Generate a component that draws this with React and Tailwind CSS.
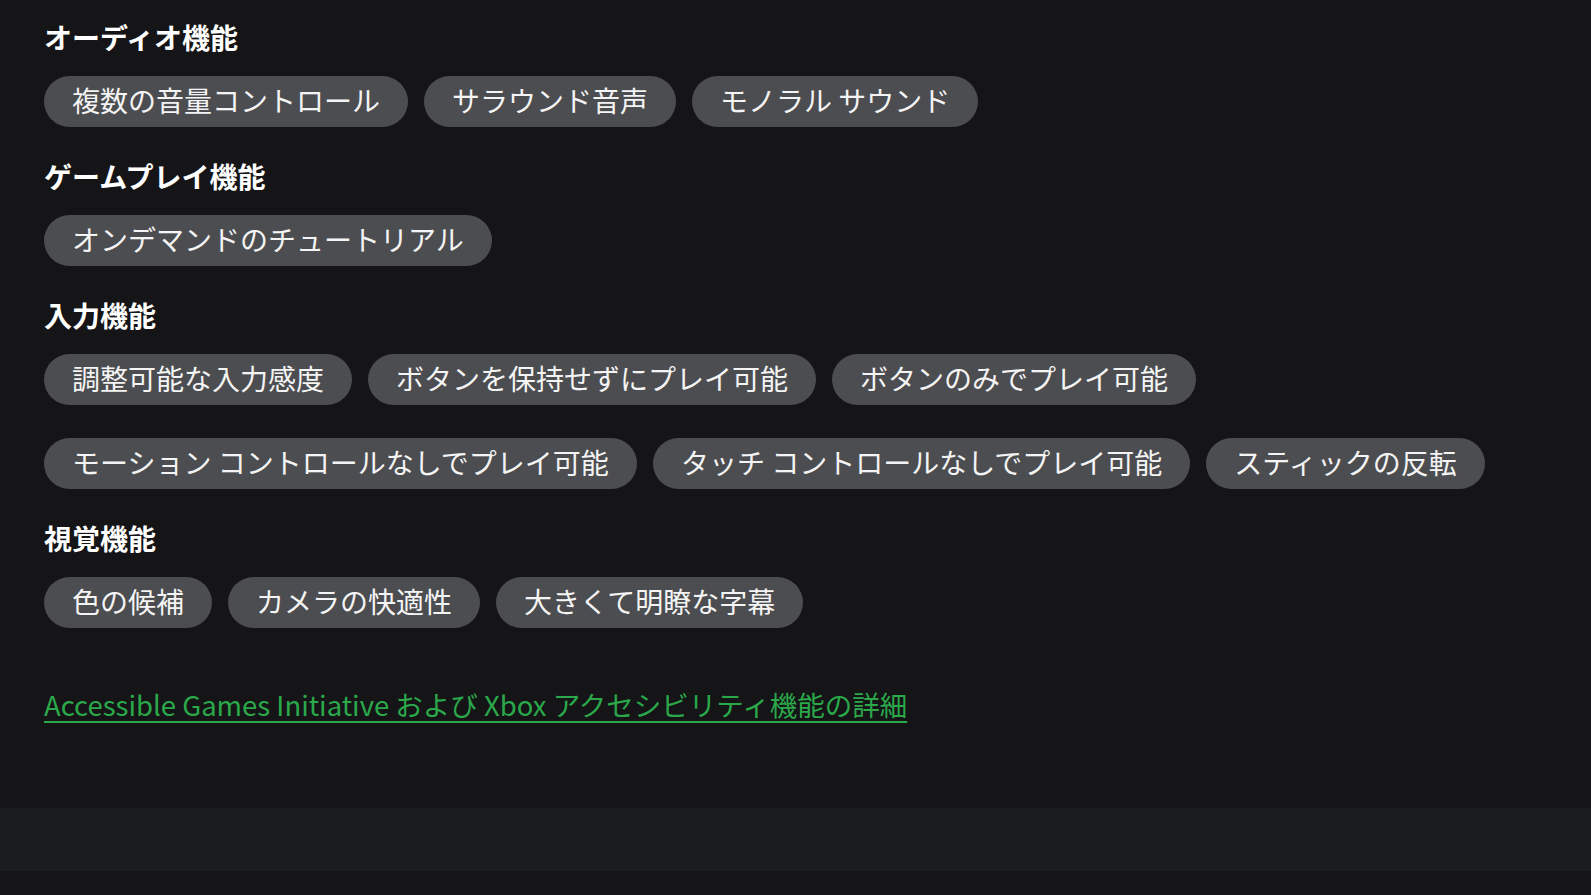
import React from "react";

const sections = [
  { title: "オーディオ機能", chips: ["複数の音量コントロール", "サラウンド音声", "モノラル サウンド"] },
  { title: "ゲームプレイ機能", chips: ["オンデマンドのチュートリアル"] },
  {
    title: "入力機能",
    chips: [
      "調整可能な入力感度",
      "ボタンを保持せずにプレイ可能",
      "ボタンのみでプレイ可能",
      "モーション コントロールなしでプレイ可能",
      "タッチ コントロールなしでプレイ可能",
      "スティックの反転",
    ],
  },
  { title: "視覚機能", chips: ["色の候補", "カメラの快適性", "大きくて明瞭な字幕"] },
];

export default function App() {
  return (
    <div
      className="min-h-[895px] w-full bg-[#151517] text-[#f2f2f2]"
      style={{ fontFamily: '"Noto Sans CJK JP", "Noto Sans", sans-serif' }}
    >
      <div className="px-[44px] pt-[19px]">
        <div className="flex flex-col gap-[31px]">
          {sections.map((s) => (
            <section key={s.title}>
              <h3 className="text-[28px] font-bold leading-[36px] text-white">{s.title}</h3>
              <div className="mt-[21px] flex flex-wrap gap-x-4 gap-y-[33px]">
                {s.chips.map((c) => (
                  <span
                    key={c}
                    className="flex h-[51px] items-center whitespace-nowrap rounded-full bg-[#4c4d50] px-[28px] pb-[3px] text-[28px] leading-none text-[#f4f4f4]"
                  >
                    {c}
                  </span>
                ))}
              </div>
            </section>
          ))}
        </div>
        <div className="mt-[56px] h-[40px] leading-[40px]">
          <a
            href="#"
            className="text-[27.5px] text-[#2aa84a] underline decoration-2 underline-offset-[5px]"
          >
            Accessible Games Initiative および Xbox アクセシビリティ機能の詳細
          </a>
        </div>
      </div>
      <div className="mt-[84px] h-[63px] bg-[#1b1c1f]" />
    </div>
  );
}
